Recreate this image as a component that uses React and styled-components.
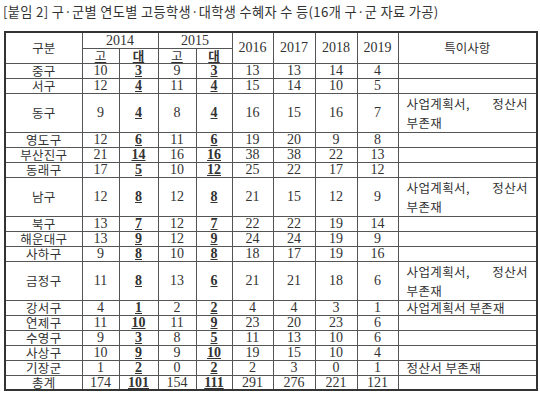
import React from 'react';
import styled, { createGlobalStyle } from 'styled-components';

const GlobalStyle = createGlobalStyle`
    body {
        margin: 0;
        background: #ffffff;
        color: #222;
        font-family: "Noto Sans CJK KR", "Liberation Sans", sans-serif;
    }
`;

const Page = styled.div`
    display: flex;
    flex-direction: column;
    width: 540px;
    height: 401px;
    background: #fff;
`;

const Title = styled.div`
    height: 31px;
    padding: 3px 0 0 3px;
    box-sizing: border-box;
    font-family: "Noto Sans CJK KR", "Liberation Sans", sans-serif;
    font-size: 13.2px;
    line-height: 18px;
    color: #333;
    letter-spacing: 0.35px;
    white-space: nowrap;
`;

const Table = styled.table`
    margin-left: 4px;
    width: 532px;
    table-layout: fixed;
    border-collapse: collapse;
    border: 2px solid #333;
`;

const Row = styled.tr`
    height: ${(p) => (p.$tall ? 39 : 15)}px;
`;

const HeadRow = styled.tr`
    height: ${(p) => p.$h}px;
`;

const Cell = styled.td`
    border: 1px solid #555;
    padding: 0;
    text-align: center;
    vertical-align: middle;
    white-space: nowrap;
    line-height: 13px;
`;

const HeadCell = styled(Cell)`
    font-family: "Liberation Serif", "Noto Sans CJK KR", serif;
    font-size: 14px;
    color: #333;
`;

const HeadLabel = styled.span`
    font-family: "Noto Sans CJK KR", sans-serif;
    font-size: 12.5px;
    color: #333;
    text-decoration: ${(p) => (p.$under ? 'underline' : 'none')};
    text-underline-offset: 1px;
    font-weight: ${(p) => (p.$bold ? 700 : 400)};
`;

const NameCell = styled(Cell)`
    font-family: "Noto Sans CJK KR", sans-serif;
    font-size: 12.5px;
    letter-spacing: 0.3px;
    color: #333;
`;

const NumCell = styled(Cell)`
    font-family: "Liberation Serif", serif;
    font-size: 14px;
    color: #333;
    font-weight: ${(p) => (p.$bold ? 700 : 400)};
    text-decoration: ${(p) => (p.$bold ? 'underline' : 'none')};
    text-underline-offset: 1px;
    text-decoration-thickness: 1px;
`;

const NoteCell = styled(Cell)`
    text-align: left;
    padding: 0 8px 0 8px;
    font-family: "Noto Sans CJK KR", sans-serif;
    font-size: 12.5px;
    letter-spacing: 0.4px;
    color: #333;
`;

const NoteLine = styled.div`
    height: 19px;
    line-height: 19px;
    display: flex;
    justify-content: ${(p) => (p.$spread ? 'space-between' : 'flex-start')};
`;

const cols = [77, 37, 39, 38, 36, 41, 42, 42, 41, 139];

const rows = [
    ['중구', 10, 3, 9, 3, 13, 13, 14, 4, ''],
    ['서구', 12, 4, 11, 4, 15, 14, 10, 5, ''],
    ['동구', 9, 4, 8, 4, 16, 15, 16, 7, 'both'],
    ['영도구', 12, 6, 11, 6, 19, 20, 9, 8, ''],
    ['부산진구', 21, 14, 16, 16, 38, 38, 22, 13, ''],
    ['동래구', 17, 5, 10, 12, 25, 22, 17, 12, ''],
    ['남구', 12, 8, 12, 8, 21, 15, 12, 9, 'both'],
    ['북구', 13, 7, 12, 7, 22, 22, 19, 14, ''],
    ['해운대구', 13, 9, 12, 9, 24, 24, 19, 9, ''],
    ['사하구', 9, 8, 10, 8, 18, 17, 19, 16, ''],
    ['금정구', 11, 8, 13, 6, 21, 21, 18, 6, 'both'],
    ['강서구', 4, 1, 2, 2, 4, 4, 3, 1, '사업계획서 부존재'],
    ['연제구', 11, 10, 11, 9, 23, 20, 23, 6, ''],
    ['수영구', 9, 3, 8, 5, 11, 13, 10, 6, ''],
    ['사상구', 10, 9, 9, 10, 19, 15, 10, 4, ''],
    ['기장군', 1, 2, 0, 2, 2, 3, 0, 1, '정산서 부존재'],
    ['총계', 174, 101, 154, 111, 291, 276, 221, 121, ''],
];

function Note({ value }) {
    if (value === 'both') {
        return (
            <NoteCell>
                <NoteLine $spread>
                    <span>사업계획서,</span>
                    <span>정산서</span>
                </NoteLine>
                <NoteLine>부존재</NoteLine>
            </NoteCell>
        );
    }
    return <NoteCell>{value}</NoteCell>;
}

function App() {
    return (
        <>
            <GlobalStyle />
            <Page>
                <Title>[붙임 2] 구·군별 연도별 고등학생·대학생 수혜자 수 등(16개 구·군 자료 가공)</Title>
                <Table>
                    <colgroup>
                        {cols.map((w, i) => (
                            <col key={i} style={{ width: w }} />
                        ))}
                    </colgroup>
                    <thead>
                        <HeadRow $h={16}>
                            <HeadCell rowSpan={2}><HeadLabel>구분</HeadLabel></HeadCell>
                            <HeadCell colSpan={2}>2014</HeadCell>
                            <HeadCell colSpan={2}>2015</HeadCell>
                            <HeadCell rowSpan={2}>2016</HeadCell>
                            <HeadCell rowSpan={2}>2017</HeadCell>
                            <HeadCell rowSpan={2}>2018</HeadCell>
                            <HeadCell rowSpan={2}>2019</HeadCell>
                            <HeadCell rowSpan={2}><HeadLabel>특이사항</HeadLabel></HeadCell>
                        </HeadRow>
                        <HeadRow $h={15}>
                            <HeadCell><HeadLabel $under>고</HeadLabel></HeadCell>
                            <HeadCell><HeadLabel $under $bold>대</HeadLabel></HeadCell>
                            <HeadCell><HeadLabel $under>고</HeadLabel></HeadCell>
                            <HeadCell><HeadLabel $under $bold>대</HeadLabel></HeadCell>
                        </HeadRow>
                    </thead>
                    <tbody>
                        {rows.map((r) => (
                            <Row key={r[0]} $tall={r[9] === 'both'}>
                                <NameCell>{r[0]}</NameCell>
                                {r.slice(1, 9).map((n, i) => (
                                    <NumCell key={i} $bold={i === 1 || i === 3}>{n}</NumCell>
                                ))}
                                <Note value={r[9]} />
                            </Row>
                        ))}
                    </tbody>
                </Table>
            </Page>
        </>
    );
}

export default App;
